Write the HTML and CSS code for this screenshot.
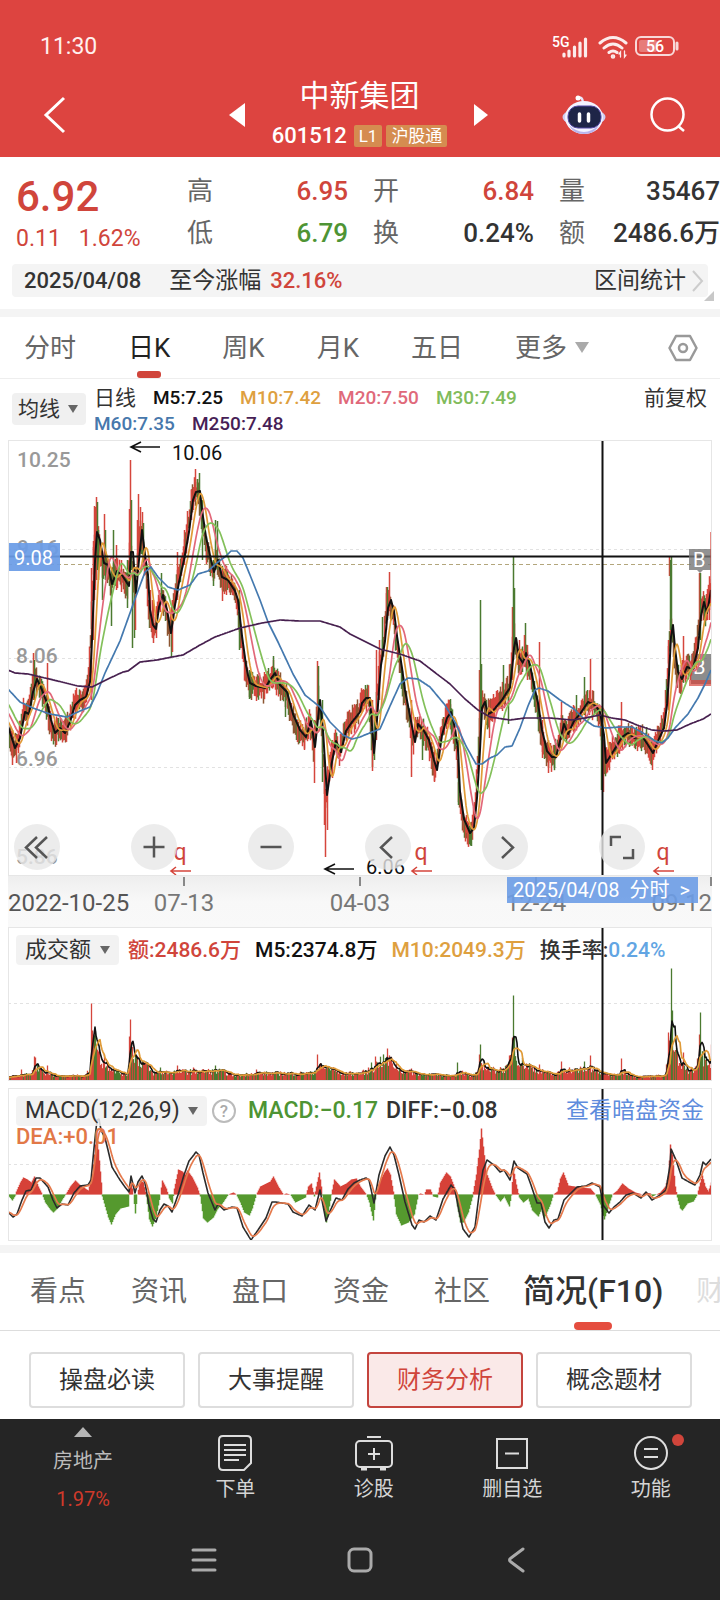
FILE: index.html
```html
<!DOCTYPE html>
<html lang="zh-CN">
<head>
<meta charset="utf-8">
<meta name="viewport" content="width=device-width, initial-scale=1">
<title>中新集团 601512</title>
<link rel="stylesheet" href="styles.css">
</head>
<body>
<header class="top">
  <div class="status">
    <time class="clock">11:30</time>
    <div class="status-icons">
      <svg class="signal" viewBox="0 0 39 24" aria-label="5G">
        <text x="0" y="12" class="sig-text">5G</text>
        <path d="M12 21v-2M17 21v-5M22.500 21v-9M28 21V8M33.500 21V4" stroke="#fff" stroke-opacity=".9" stroke-width="3.200" stroke-linecap="round"/>
      </svg>
      <svg class="wifi" viewBox="0 0 30 24" fill="none" stroke="#fff" stroke-opacity=".9" stroke-width="3" stroke-linecap="round">
        <path d="M2 8Q15-3 28 8M6 13q9-8 18 0M11 17.500q4-3 8 0"/><circle cx="15" cy="21.500" r=".8" fill="#fff"/><path stroke-width="1.300" d="M22.500 22v-5l-1.500 2M26.500 16v6l1.500-2"/>
      </svg>
      <svg class="battery" viewBox="0 0 45 22">
        <rect x="1" y="1" width="38" height="18" rx="5" fill="none" stroke="#fff" stroke-opacity=".8" stroke-width="2"/>
        <rect x="4" y="4" width="18" height="12" rx="2" fill="#fff" fill-opacity=".3"/>
        <path d="M42 7v6" stroke="#fff" stroke-opacity=".8" stroke-width="3" stroke-linecap="round"/>
        <text x="20" y="15.500" text-anchor="middle" class="bat-text">56</text>
      </svg>
    </div>
  </div>
  <div class="titlebar">
    <button class="icon-btn back" aria-label="返回"><svg viewBox="0 0 24 40" width="24" height="40"><path d="M21 3 3 20l18 17" fill="none" stroke="#fff" stroke-width="3"/></svg></button>
    <button class="icon-btn prev" aria-label="上一只"><svg viewBox="0 0 16 24" width="16" height="24"><path d="M16 0v24L0 12z" fill="#fff"/></svg></button>
    <div class="title">
      <h1>中新集团</h1>
      <div class="code"><span>601512</span><b>L1</b><b>沪股通</b></div>
    </div>
    <button class="icon-btn next" aria-label="下一只"><svg viewBox="0 0 14 22" width="14" height="22"><path d="M0 0v22l14-11z" fill="#fff"/></svg></button>
    <button class="icon-btn robot" aria-label="助手">
      <svg viewBox="0 0 44 40" width="44" height="40">
        <path d="M15 3q6-2 6 5" fill="none" stroke="#e8e6fb" stroke-width="2.500"/><circle cx="16" cy="3" r="2.500" fill="#fff"/>
        <ellipse cx="22" cy="22" rx="21.500" ry="9" fill="#cfcdf3"/><ellipse cx="22" cy="22.500" rx="19" ry="16.500" fill="#f4f3ff"/>
        <path d="M7 30q15 14 30 0-4 9-15 9T7 30" fill="#b9b4ec"/>
        <rect x="6" y="11" width="33" height="22" rx="10" fill="#1e2547" stroke="#5348a5"/>
        <path d="M17.500 19v7M26.500 19v7" stroke="#fff" stroke-width="3.500" stroke-linecap="round"/>
      </svg>
    </button>
    <button class="icon-btn search" aria-label="搜索"><svg viewBox="0 0 36 36" width="36" height="36"><g fill="none" stroke="#fff" stroke-width="2.500"><circle cx="17.500" cy="17.500" r="16"/><path d="m28 29 6 5"/></g></svg></button>
  </div>
</header>

<main>
  <section class="quote">
    <div class="last"><strong>6.92</strong><span><i>0.11</i><i>1.62%</i></span></div>
    <dl class="facts">
      <div><dt>高</dt><dd class="red">6.95</dd></div>
      <div><dt>开</dt><dd class="red">6.84</dd></div>
      <div><dt>量</dt><dd>35467</dd></div>
      <div><dt>低</dt><dd class="green">6.79</dd></div>
      <div><dt>换</dt><dd>0.24%</dd></div>
      <div><dt>额</dt><dd>2486.6万</dd></div>
    </dl>
  </section>
  <div class="range">
    <span class="range-date">2025/04/08</span><span>至今涨幅</span><span class="red">32.16%</span>
    <a href="#stats">区间统计<svg viewBox="0 0 12 22" width="12" height="22"><path d="m1 1 9 10L1 21" fill="none" stroke="#ccc" stroke-width="2"/></svg></a>
    <svg class="corner" viewBox="0 0 10 10" width="10" height="10"><path d="M10 0v10H0z" fill="#c8c8c8"/></svg>
  </div>

  <nav class="periods">
    <button>分时</button>
    <button class="on">日K</button>
    <button>周K</button>
    <button>月K</button>
    <button>五日</button>
    <label class="more"><select aria-label="更多周期"><option>更多</option></select></label>
    <button class="gear" aria-label="设置"><svg viewBox="0 0 30 30" width="30" height="30"><g fill="none" stroke="#999" stroke-width="2.500" stroke-linejoin="round"><path d="M8 3h14l6.500 12L22 27H8L1.500 15z"/><circle cx="15" cy="15" r="4"/></g></svg></button>
  </nav>

  <div class="ma">
    <label class="drop"><select aria-label="主图指标"><option>均线</option></select></label>
    <div class="ma-list">
      <span class="dark">日线</span><span class="black">M5:7.25</span><span class="gold">M10:7.42</span><span class="pink">M20:7.50</span><span class="lime">M30:7.49</span>
      <span class="blue">M60:7.35</span><span class="purple">M250:7.48</span>
    </div>
    <button class="adjust">前复权</button>
  </div>

  <div class="charts">
    <div class="chart price">
      <svg id="price" viewBox="8 440 704 436" role="img" aria-label="日K线图"></svg>
      <div class="tools">
        <button aria-label="最左"><svg viewBox="0 0 46 46"><path d="M23 13 12 23.500 23 34M33 13 22 23.500 33 34"/></svg></button>
        <button aria-label="放大"><svg viewBox="0 0 46 46"><path d="M23 12.500v21M12.500 23h21"/></svg></button>
        <button aria-label="缩小"><svg viewBox="0 0 46 46"><path d="M12.500 23h21"/></svg></button>
        <button aria-label="左移"><svg viewBox="0 0 46 46"><path d="M27 13 16 23.500 27 34"/></svg></button>
        <button aria-label="右移"><svg viewBox="0 0 46 46"><path d="m20 13 11 10.500L20 34"/></svg></button>
        <button aria-label="全屏"><svg viewBox="0 0 46 46"><path d="M12 22v-9h10M24 34h10v-9"/></svg></button>
      </div>
    </div>
    <div class="dates">
      <time>2022-10-25</time><time>07-13</time><time>04-03</time><time>12-24</time><time>09-12</time>
      <button class="day">2025/04/08<span>分时</span><span>&gt;</span></button>
    </div>
    <div class="chart volume">
      <svg id="volume" viewBox="8 927 704 154" role="img" aria-label="成交额"></svg>
      <div class="legend">
        <label class="drop"><select aria-label="副图指标"><option>成交额</option></select></label>
        <span class="red">额:2486.6万</span><span class="black">M5:2374.8万</span><span class="gold">M10:2049.3万</span><span class="dark">换手率:<span class="sky">0.24%</span></span>
      </div>
    </div>
    <div class="chart macd">
      <svg id="macd" viewBox="8 1088 704 153" role="img" aria-label="MACD"></svg>
      <div class="legend tight">
        <label class="drop"><select aria-label="副图指标二"><option>MACD(12,26,9)</option></select></label>
        <button class="help" aria-label="说明">?</button>
        <span class="green">MACD:−0.17</span><span class="dark">DIFF:−0.08</span>
        <a href="#fund">查看暗盘资金</a>
      </div>
      <div class="dea">DEA:+0.01</div>
    </div>
  </div>

  <nav class="sections">
    <button>看点</button><button>资讯</button><button>盘口</button><button>资金</button><button>社区</button><button class="on">简况(F10)</button><button class="fade">财</button>
  </nav>
  <div class="chips">
    <button>操盘必读</button><button>大事提醒</button><button class="on">财务分析</button><button>概念题材</button>
  </div>
</main>

<footer class="bottom">
  <div class="actions">
    <button class="sector"><svg viewBox="0 0 18 10" width="18" height="10"><path d="M9 0l9 10H0z" fill="#b5b5b5"/></svg><span>房地产</span><em>1.97%</em></button>
    <button><svg viewBox="0 0 40 36" width="40" height="36"><path d="M8 1h24q4 0 4 4v23l-7 7H8q-4 0-4-4V5q0-4 4-4zM9 10h22M9 15h22M9 20h22M9 25h15"/></svg><span>下单</span></button>
    <button><svg viewBox="0 0 40 36" width="40" height="36"><rect x="2" y="6" width="36" height="26" rx="4"/><path d="M13 2h14M20 13v12M14 19h12"/><path d="M7 34h6M26 34h6" stroke-width="3"/></svg><span>诊股</span></button>
    <button><svg viewBox="0 0 40 36" width="40" height="36"><path d="M5 4h30v29H5zM13 18.500h14"/></svg><span>删自选</span></button>
    <button><svg viewBox="0 0 40 36" width="40" height="36"><circle cx="20" cy="18" r="16"/><path d="M13 14h14M13 22h14"/></svg><span>功能</span><i class="dot"></i></button>
  </div>
  <div class="system">
    <button aria-label="菜单"><svg viewBox="0 0 26 26" width="26" height="26"><path d="M2 3h22M2 13h22M2 23h22"/></svg></button>
    <button aria-label="主页"><svg viewBox="0 0 26 26" width="26" height="26"><rect x="2" y="2" width="22" height="22" rx="5"/></svg></button>
    <button aria-label="后退"><svg viewBox="0 0 26 26" width="26" height="26"><path d="M20 2 8 11q-3 2 0 4l12 9"/></svg></button>
  </div>
</footer>
<script src="charts.js"></script>
</body>
</html>
```
FILE: styles.css
```css
* { box-sizing: border-box; }
body {
  margin: 0;
  background: #fff;
  color: #333;
  font-family: Roboto, "Noto Sans CJK SC", sans-serif;
  font-size: 22px;
  line-height: 26px;
}
button, select {
  margin: 0;
  padding: 0;
  border: 0;
  background: none;
  color: inherit;
  font: inherit;
  white-space: nowrap;
}
select { appearance: none; }
a { color: inherit; text-decoration: none; }
svg { display: block; }
h1, dl, dd { margin: 0; }
i, em { font-style: normal; }

.red { color: #d0453b; }
.green { color: #4e9434; }
.black { color: #111; }
.dark { color: #333; }
.gold { color: #dea03f; }
.pink { color: #e0697a; }
.lime { color: #80bb5b; }
.blue { color: #4778ac; }
.purple { color: #471e56; }
.sky { color: #62a5e3; }

.top { background: #dd4440; color: #fff; padding: 34px 0 8px; }
.status { display: flex; justify-content: space-between; align-items: center; padding: 0 40px; }
.clock { font-size: 23px; color: #fff0ef; }
.status-icons { display: flex; align-items: center; gap: 7px; }
.signal { width: 39px; height: 24px; overflow: visible; }
.wifi { width: 30px; height: 24px; }
.battery { width: 45px; height: 22px; }
.sig-text { font-size: 14px; font-weight: 500; fill: #fff; }
.bat-text { font-size: 16px; font-weight: 500; fill: #fff; }
.titlebar { display: grid; grid-template-columns: 229px 16px 1fr 14px 74px 44px 44px 70px; align-items: center; padding-top: 15px; }
.icon-btn { display: flex; padding-top: 6px; }
.back { padding-left: 43px; }
.robot { grid-column: 6; }
.search { grid-column: 8; width: 36px; }
.title { text-align: center; }
.title h1 { font-size: 30px; font-weight: 400; line-height: 42px; }
.code { display: flex; justify-content: center; align-items: center; gap: 4px; height: 32px; padding-top: 5px; }
.code span { font-weight: 500; margin-right: 3px; }
.code b { height: 22px; padding: 0 5px; background: #d58c50; border-radius: 2px; font-size: 17px; font-weight: 400; line-height: 22px; }

.quote { display: grid; grid-template-columns: 187px 1fr; padding-top: 10px; overflow: hidden; }
.last { padding: 8px 0 0 16px; color: #d0453b; }
.last strong { display: block; font-size: 42px; font-weight: 500; line-height: 44px; }
.last span { display: flex; gap: 18px; margin-top: 5px; font-size: 23px; line-height: 30px; }
.facts { display: grid; grid-template-columns: 161px 161px 161px; grid-auto-rows: 42px; align-content: start; column-gap: 25px; padding-top: 3px; font-size: 26px; line-height: 42px; }
.facts div { display: flex; justify-content: space-between; }
.facts dt { color: #666; }
.facts dd { font-weight: 500; }
.range { position: relative; display: flex; align-items: center; height: 33px; margin: 10px 12px 12px; padding: 0 4px 0 12px; background: #f4f4f4; border-radius: 4px; font-size: 23px; }
.range-date { margin-right: 28px; font-size: 22px; font-weight: 500; }
.range .red { margin-left: 9px; font-size: 22px; font-weight: 500; }
.range a { display: flex; align-items: center; gap: 6px; margin-left: auto; }
.corner { position: absolute; right: -6px; bottom: -4px; }

.periods { display: flex; align-items: center; height: 70px; padding: 0 22px 0 24px; border-top: 8px solid #f4f4f4; border-bottom: 1px solid #eee; color: #666; font-size: 26px; }
.periods > * { position: relative; margin-right: 52px; line-height: 60px; }
.periods .on { color: #222; }
.periods .on::after { content: ""; position: absolute; left: 9px; bottom: 0; width: 24px; height: 7px; border-radius: 3px; background: #d0453b; }
.more::after { content: ""; display: inline-block; margin-left: 7px; border: 7px solid transparent; border-top: 11px solid #aaa; border-bottom: 0; vertical-align: 4px; }
.periods .gear { margin: 0 0 0 auto; }

.ma { display: flex; align-items: flex-start; padding: 6px 13px 3px 12px; font-size: 21px; }
.drop { display: flex; align-items: center; height: 32px; padding: 0 8px 0 6px; background: #f0f0f0; border-radius: 4px; }
.drop::after { content: ""; margin-left: 8px; border: 5px solid transparent; border-top: 8px solid #666; border-bottom: 0; }
.ma .drop { margin: 8px 8px 0 0; }
.ma-list { display: flex; flex: 1; flex-wrap: wrap; column-gap: 17px; padding-right: 90px; font-size: 19px; font-weight: 500; }
.ma-list .dark { font-size: 21px; font-weight: 400; }

.charts { padding: 0 8px; }
.chart { position: relative; outline: 1px solid #e6e6e6; outline-offset: -1px; }
.chart > svg { width: 100%; height: auto; }
.tools { position: absolute; left: 6px; right: 67px; bottom: 6px; display: flex; justify-content: space-between; }
.tools button { width: 46px; height: 46px; border-radius: 50%; background: rgba(231, 231, 231, .8); }
.tools svg { fill: none; stroke: #555; stroke-width: 2.500; }
.dates { position: relative; display: grid; grid-template-columns: 1fr 2fr 2fr 2fr 1fr; height: 51px; background: linear-gradient(#eee, #f8f8f8 50%, #f9f9f9); color: #777; font-size: 24px; text-align: center; white-space: nowrap; }
.dates time { min-width: 0; padding-top: 14px; background: linear-gradient(#888, #888) 50% 1px / 2px 9px no-repeat; }
.dates time:first-child { color: #555; background: none; text-align: left; }
.dates time:nth-child(5) { background-position-x: 100%; direction: rtl; text-align: right; direction: ltr; }
.day { position: absolute; top: 1px; right: 14px; display: flex; gap: 10px; height: 26px; padding: 0 8px 0 6px; background: rgba(107, 156, 230, .9); color: #fff; font-size: 20px; }

.legend { position: absolute; left: 8px; right: 8px; top: 8px; display: flex; align-items: center; gap: 14px; font-size: 21px; font-weight: 500; white-space: nowrap; }
.legend .drop { height: 30px; padding: 0 9px; margin-right: -5px; font-size: 22px; font-weight: 400; background: rgba(240, 240, 240, .85); }
.volume { margin-bottom: 7px; }
.tight { gap: 8px; font-size: 23px; }
.tight .drop { margin-right: -3px; font-size: 23px; }
.tight a { margin-left: auto; color: #5f8cdd; font-weight: 400; }
.help { width: 24px; height: 24px; margin-right: 4px; border: 2px solid #bbb; border-radius: 50%; color: #aaa; font-size: 17px; line-height: 20px; }
.dea { position: absolute; left: 8px; top: 36px; color: #e27847; font-weight: 500; }

.sections { display: flex; align-items: center; height: 86px; margin-top: 4px; padding-left: 30px; border-top: 8px solid #f4f4f4; border-bottom: 1px solid #ddd; overflow: hidden; color: #666; font-size: 28px; }
.sections button { position: relative; flex: none; margin-right: 45px; line-height: 77px; }
.sections .on { margin: 0 33px 0 -12px; color: #333; font-size: 32px; font-weight: 500; }
.sections .on::after { content: ""; position: absolute; left: 50%; bottom: 0; width: 38px; height: 8px; margin-left: -19px; border-radius: 4px; background: #e54d3f; }
.sections .fade { color: #ddd; }
.chips { display: grid; grid-template-columns: repeat(4, 1fr); gap: 13px; padding: 21px 28px 11px 29px; }
.chips button { height: 56px; border: 2px solid #ddd; border-radius: 4px; font-size: 24px; }
.chips .on { border-color: #c4443d; background: #fae9e8; color: #d0453b; }

.bottom { background: #252525; color: #d5d5d5; }
.actions { display: grid; grid-template-columns: 6fr 5fr 5fr 5fr 5fr; padding-top: 8px; font-size: 20px; }
.actions button { position: relative; display: flex; flex-direction: column; align-items: center; padding-top: 8px; gap: 4px; line-height: 28px; }
.actions svg { fill: none; stroke: #ddd; stroke-width: 2; }
.actions .sector { padding-top: 0; gap: 10px; color: #bbb; }
.actions .sector svg { stroke: none; }
.sector em { color: #cf3a2b; }
.dot { position: absolute; left: 50%; top: 7px; width: 12px; height: 12px; margin-left: 21px; border-radius: 50%; background: #d0453b; }
.system { display: flex; justify-content: center; gap: 130px; padding: 34px 0 28px; }
.system svg { fill: none; stroke: #aaa; stroke-width: 3; stroke-linecap: round; }

.axis { font-size: 21px; font-weight: 500; fill: #999; }
.mark { font-size: 20px; fill: #111; }
.event { font-size: 23px; fill: #d0453b; text-anchor: middle; }
.tag { font-size: 20px; fill: #fff; }
```
FILE: charts.js
```js
const RED = "#d5463c", GREEN = "#4b7a30", BROWN = "#8c5632";
const parse = s => s.trim().split(/\s+/).map(p => p.split(",").map(Number));

// Fill a series of one value per pixel column between key points.
function series(text) {
  const pts = parse(text), out = [];
  let k = 0;
  for (let x = 8; x <= 711; x++) {
    while (k < pts.length - 2 && pts[k + 1][0] < x) k++;
    const [a, b] = [pts[k], pts[k + 1]];
    const t = Math.max(0, Math.min(1, (x - a[0]) / (b[0] - a[0])));
    out.push(a[1] + (b[1] - a[1]) * t);
  }
  return out;
}
let seed = 7;
const rnd = () => (seed = (seed * 16807) % 2147483647) / 2147483647;
const line = (v, color, w = 1.7) => `<polyline fill="none" stroke="${color}" stroke-width="${w}" stroke-linejoin="round" points="${v.map((y, i) => (i + 8) + "," + y.toFixed(1)).join(" ")}"/>`;
const bar = (x, top, bottom, color, w = 1.5) => `<path d="M${x + .5} ${top.toFixed(1)}V${bottom.toFixed(1)}" stroke="${color}" stroke-width="${w}"/>`;
const average = (v, n, before) => v.map((_, i) => {
  let s = 0;
  for (let k = 0; k < n; k++) s += i - k >= 0 ? v[i - k] : before(k - i);
  return s / n;
});
const grid = y => `<path d="M8 ${y}H712" stroke="#e2e2e2" stroke-dasharray="3 3"/>`;
const cursor = (a, b) => `<path d="M602.5 ${a}V${b}" stroke="#111" stroke-width="2"/>`;

const ma5 = series(`8,726 15,748 20,738 25,712 29,714 33,692 37,679 42,690 47,703 51,720 55,733 60,728 65,733 70,722 75,705 80,700 86,697 90,682
92,640 95,561 97,532 100,540 104,563 108,565 112,584 117,571 122,575 129,586 131,552 133,552 136,593 139,560 142,530 145,555 148,575 150,610 153,625 156,629 159,607 163,595 167,610 171,633 175,605 179,582 184,560 189,532 193,500 196,492 200,491 202,510 206,537 211,560 214,572 218,560 222,577 228,580 235,591 238,600 242,636 246,665 248,675
250,683 256,686 265,688 270,680 275,673 280,685 287,692 293,714 300,730 306,737 311,721 315,747 320,700 323,730 327,795 331,767 336,741 341,752 346,731 352,722 360,712 362,703 366,698 370,698 374,753 377,720 379,690 381,665 385,641 388,608 391,600 394,611 397,636 402,668 405,690 410,716 415,742 418,724 424,731 429,740 434,760 437,770 442,735 447,718 451,712 455,728 458,750 460,792 464,819 470,833 474,828 477,798 480,750 482,708 485,702 488,714 492,712 496,707 502,700 507,692 510,688 513,660 514,648 516,638 519,657 523,663 526,653 530,665 535,690 538,703 542,730 547,751 552,757 556,757 560,741 564,724 568,734 574,721 580,714 588,702 595,705 600,712 604,735 606,763 611,755 616,747 622,737 628,733 634,738 642,736 648,745 653,753 658,741 664,728 667,705 669,675 671,637 673,625 675,648 678,672 682,679 687,667 693,669 698,648 701,616 704,602 707,613 709,602 711,590`);
const ma60 = series(`8,689 20,702 33,708 50,714 67,717 80,711 90,707 97,693 105,673 120,641 135,599 145,572 151,567 158,577 168,587 178,590 190,585 198,574 208,571 218,562 226,556 231,551 237,551 243,558 250,575 260,600 268,622 278,642 293,674 305,695 320,707 330,722 343,735 352,739 360,737 372,732 380,729 390,706 400,684 408,678 418,679 430,687 445,705 456,724 466,746 476,764 482,764 490,758 497,755 505,747 512,746 520,728 528,706 535,690 539,688 548,691 560,700 574,709 585,720 594,726 606,728 620,727 632,727 645,734 655,741 662,743 668,738 675,728 688,714 698,698 705,684 711,670`);
const ma250 = series(`8,670 15,673 28,674 45,678 62,682 78,686 92,687 100,683 110,678 123,672 128,671 140,662 157,660 172,657 183,655 200,645 215,637 240,628 262,623 280,620 300,621 320,621 330,624 340,627 350,634 360,639 380,649 400,654 420,661 433,671 450,684 465,699 478,710 490,717 510,720 525,718 550,718 572,720 585,718 600,715 612,718 625,720 637,725 652,730 664,731 677,730 690,724 703,719 711,714`);

function drawPrice() {
  const history = k => 728 - k * 1.8;
  let s = grid(549.5) + grid(658.5) + grid(767.5);
  const labels = [[17, 467, "10.25"], [17, 555, "9.16"], [16, 663, "8.06"], [16, 766, "6.96"], [16, 864, "5.86"]];
  s += `<path d="M8 564.5H712" stroke="#b3a67c" stroke-dasharray="4 3"/>`;
  labels.forEach(l => s += `<text class="axis" x="${l[0]}" y="${l[1]}">${l[2]}</text>`);
  s += `<path d="M691 654h20v30h-20z" fill="#666" fill-opacity=".75"/><path d="M689 680h22v6h-22z" fill="#d5463c" fill-opacity=".7"/><text class="tag" x="693" y="674">B</text>`;
  for (let i = 0; i < ma5.length; i++) {
    const p = ma5[Math.min(i + 2, 703)], slope = ma5[Math.min(i + 3, 703)] - ma5[Math.max(i - 1, 0)];
    const up = 4 + rnd() * 11, down = 4 + rnd() * 12;
    const c = rnd() < (slope > 1 ? .4 : .68) ? RED : rnd() < .5 ? GREEN : BROWN;
    s += bar(i + 8, p - up, p + down, c);
  }
  const spikes = `33,653,700,0 34,660,700,1 47,663,705,0 12,730,765,0 16,735,763,0 91,568,700,0 93,541,640,0 94,506,600,0 95,507,590,0 96,497,580,0 97,502,570,1 98,530,580,1 102,560,600,1 104,514,575,0 105,530,580,1 111,570,626,1 113,530,585,1 116,545,590,0 121,560,592,0 127,560,608,1 129,509,570,0 130,460,560,0 131,500,570,1 132,570,648,1 134,570,638,1 135,580,630,0 137,520,570,0 138,494,545,0 140,507,545,0 142,512,550,0 143,523,555,1 150,590,628,0 152,600,638,0 153,600,643,0 156,610,638,0 161,573,600,1 171,620,657,1 172,600,652,0 177,552,600,0 184,530,565,0 187,511,540,0 191,490,520,0 193,487,510,0 195,469,500,0 197,479,500,1 199,473,500,1 202,500,560,1 206,540,564,0 213,560,586,1 215,520,570,1 217,521,570,1 222,570,601,0 239,590,650,1 249,670,699,1 256,680,701,0 273,656,680,1 285,690,717,1 297,720,742,0 304,730,750,0 314,720,783,0 317,661,720,0 318,666,720,1 322,700,782,1 324,760,825,0 325,790,857,0 327,780,830,0 332,740,778,0 372,700,771,0 374,715,760,1 376,650,740,0 379,640,700,0 382,617,660,1 386,587,630,0 387,587,620,1 389,572,610,0 411,700,777,0 434,750,782,0 422,735,760,1 450,699,725,1 458,740,805,1 466,815,833,0 471,830,846,1 479,670,760,0 480,600,740,1 481,664,720,1 489,700,738,0 503,665,700,1 508,690,724,1 512,607,680,0 513,556,660,1 514,588,650,1 519,640,665,0 525,623,660,1 524,635,665,0 527,645,680,0 539,642,710,0 542,720,758,0 548,740,773,0 554,745,768,1 561,702,740,0 576,695,725,1 584,677,715,1 590,659,705,0 601,715,790,1 603,740,792,0 621,702,740,0 646,727,740,1 652,740,770,0 668,640,710,0 669,557,576,0 670,560,630,1 671,557,630,1 683,636,680,0 681,665,694,0 696,640,670,0 699,573,612,0 700,573,640,1 707,600,620,0 709,590,620,0 711,532,610,0`;
  parse(spikes).forEach(([x, a, b, g]) => s += bar(x, a, b, g ? GREEN : RED));
  s += line(ma5, "#111", 2) + line(average(ma5, 8, history), "#e09b38") + line(average(ma5, 18, history), "#e2687a") + line(average(ma5, 28, history), "#83c05a") + line(ma60, "#4479af") + line(ma250, "#47204f");
  s += `<path d="M8 556.5H712" stroke="#111" stroke-width="2"/>` + cursor(440, 876);
  s += `<path d="M8 543h52v28H8z" fill="#6b9ce6" fill-opacity=".93"/><text class="tag" x="14" y="565">9.08</text>`;
  s += `<path d="M689 549h22v21h-8l-3 3-3-3h-8z" fill="#777" fill-opacity=".8"/><text class="tag" x="693" y="567">B</text><path d="M711 532v70" stroke="${RED}"/>`;
  s += `<text class="mark" x="172" y="460">10.06</text><text class="mark" x="366" y="874">6.06</text>`;
  s += `<path d="M160 447h-29m10-5-10 5 10 5M354 869h-29m10-5-10 5 10 5" fill="none" stroke="#111" stroke-width="1.6"/>`;
  [180, 421, 663].forEach(x => s += `<text class="event" x="${x}" y="860">q</text><path d="M${x + 11} 871h-20m5-4-5 4 5 4" fill="none" stroke="${RED}" stroke-width="1.6"/>`);
  document.getElementById("price").innerHTML = s;
}

function drawVolume() {
  const base = 1080.5;
  const v = series(`8,3 30,5 36,13 45,6 60,3 85,4 90,10 94,40 100,20 104,15 110,13 120,6 127,5 130,35 137,20 145,15 152,6 160,7 200,8 220,8 235,4 255,6 310,6 320,12 328,12 340,6 360,6 372,10 380,18 390,18 400,9 415,6 440,4 455,4 460,8 470,3 477,6 482,16 490,9 500,10 507,11 513,30 520,17 530,13 540,8 555,4 562,10 575,9 592,11 600,6 615,4 623,8 635,3 645,3 665,4 669,35 674,30 680,12 687,9 695,10 700,25 706,18 711,18`).map(y => 1 + y * (.6 + rnd() * .8));
  const colors = v.map(() => rnd() < .65 ? RED : GREEN);
  parse(`21,11,0 34,24,0 35,23,0 47,15,0 91,77,0 92,50,0 93,46,0 94,45,1 96,34,1 104,26,0 129,44,0 130,61,0 131,36,1 160,13,1 177,15,0 193,13,0 215,15,1 256,11,0 317,26,0 371,18,1 375,24,0 387,32,0 390,20,0 411,12,0 457,18,1 479,26,0 480,36,1 509,25,0 512,43,0 513,85,1 514,44,1 539,16,0 561,19,0 584,19,1 590,25,0 621,22,0 668,48,0 669,40,0 671,112,1 672,70,1 683,28,0 697,22,0 699,46,0 700,68,1 711,36,0`).forEach(([x, h, g]) => {
    v[x - 8] = h;
    colors[x - 8] = g ? GREEN : RED;
  });
  const y = n => average(v, n, () => 3).map(h => base - h);
  document.getElementById("volume").innerHTML = grid(1003.5) + v.map((h, i) => bar(i + 8, base - h, base, colors[i], 1.3)).join("") + line(y(5), "#111", 1.6) + line(y(10), "#e09b38") + cursor(927, 1081);
}

function drawMacd() {
  const zero = 1194.5;
  const h = series(`8,-1 12,-6 15,-1 16,3 20,12 23,17 27,15 31,12 34,18 38,8 42,0 45,-8 50,-15 53,-18 57,-14 62,-5 66,1 70,8 75,14 80,9 88,4 92,20 95,50 96,56 98,45 101,12 102,-2 104,-9 108,-23 111,-30 115,-20 120,-14 128,-12 129,8 131,12 133,0 135,-19 137,0 140,14 143,12 146,-2 149,-25 152,-32 156,-22 160,0 162,14 166,6 169,-4 172,-9 174,6 178,25 182,23 185,20 187,24 192,17 197,7 200,-2 203,-24 207,-28 213,-23 217,-15 222,-9 228,0 233,2 236,0 240,-8 244,-18 249,-21 252,-14 256,0 260,8 266,11 270,13 273,18 278,8 283,0 286,1 290,0 295,-8 299,-6 305,-3 308,8 311,11 314,-2 316,8 319,22 321,8 323,-10 326,-28 329,-12 332,5 334,15 340,8 346,11 351,15 356,16 360,8 366,0 369,-8 373,-26 375,-5 378,10 384,22 387,26 390,20 393,3 396,-20 401,-31 408,-28 414,-20 418,0 420,1 424,0 426,5 430,5 433,-2 437,-3 440,12 446,22 450,18 455,5 457,-12 460,-28 463,-28 468,-18 472,-3 476,20 479,45 481,66 483,48 486,22 492,6 495,0 500,-7 504,-2 509,-12 511,-1 513,26 516,10 519,-3 523,-8 528,-4 532,-16 538,-22 541,-15 544,-24 550,-10 553,0 557,3 560,16 563,22 568,9 580,7 590,6 595,0 600,-10 604,-25 608,-12 612,0 617,4 622,11 628,6 635,2 642,0 645,2 650,1 652,-2 656,0 660,2 665,8 668,18 670,50 672,40 675,8 677,-3 680,-14 682,-16 687,-9 693,-7 697,0 700,12 702,19 705,8 708,3 711,12`);
  const diff = series(`8,1212 13,1217 17,1214 22,1200 26,1191 31,1190 36,1178 40,1178 48,1187 53,1200 57,1208 62,1204 68,1205 74,1193 80,1186 88,1185 91,1180 94,1148 97,1120 99,1119 101,1130 105,1138 108,1150 112,1167 120,1180 125,1187 129,1192 131,1176 135,1193 138,1182 142,1176 145,1183 149,1205 153,1219 156,1222 160,1210 164,1204 168,1206 172,1212 178,1195 184,1175 189,1161 193,1156 196,1152 199,1155 203,1173 208,1193 215,1210 218,1204 224,1210 232,1207 237,1208 243,1227 251,1240 258,1230 266,1218 272,1202 276,1202 288,1204 293,1212 302,1216 309,1205 315,1210 320,1190 326,1221 331,1209 336,1198 342,1200 348,1189 354,1183 360,1180 366,1178 369,1180 374,1203 379,1175 385,1156 390,1147 394,1155 399,1175 405,1202 412,1225 415,1229 419,1220 424,1222 430,1216 436,1220 443,1199 451,1185 455,1190 459,1211 463,1229 469,1237 475,1227 479,1195 483,1170 487,1160 494,1165 500,1172 504,1170 510,1180 514,1161 518,1168 527,1174 531,1185 537,1203 541,1203 545,1222 549,1228 554,1220 558,1219 564,1200 570,1194 577,1187 586,1186 592,1183 600,1187 603,1205 609,1213 614,1207 620,1202 626,1195 633,1193 641,1198 646,1192 652,1200 660,1195 666,1190 670,1165 671,1149 676,1160 682,1178 689,1182 695,1185 700,1175 703,1162 706,1165 711,1159`);
  let e = diff[0];
  const dea = diff.map(d => e += (d - e) * .25);
  document.getElementById("macd").innerHTML = grid(1164.5) + h.map((v, i) => bar(i + 8, zero - v, zero, v > 0 ? "#d64239" : "#55992f")).join("") + line(diff, "#2b2b2b", 1.6) + line(dea, "#e57a4c") + cursor(1088, 1241);
}

drawPrice();
drawVolume();
drawMacd();
```
